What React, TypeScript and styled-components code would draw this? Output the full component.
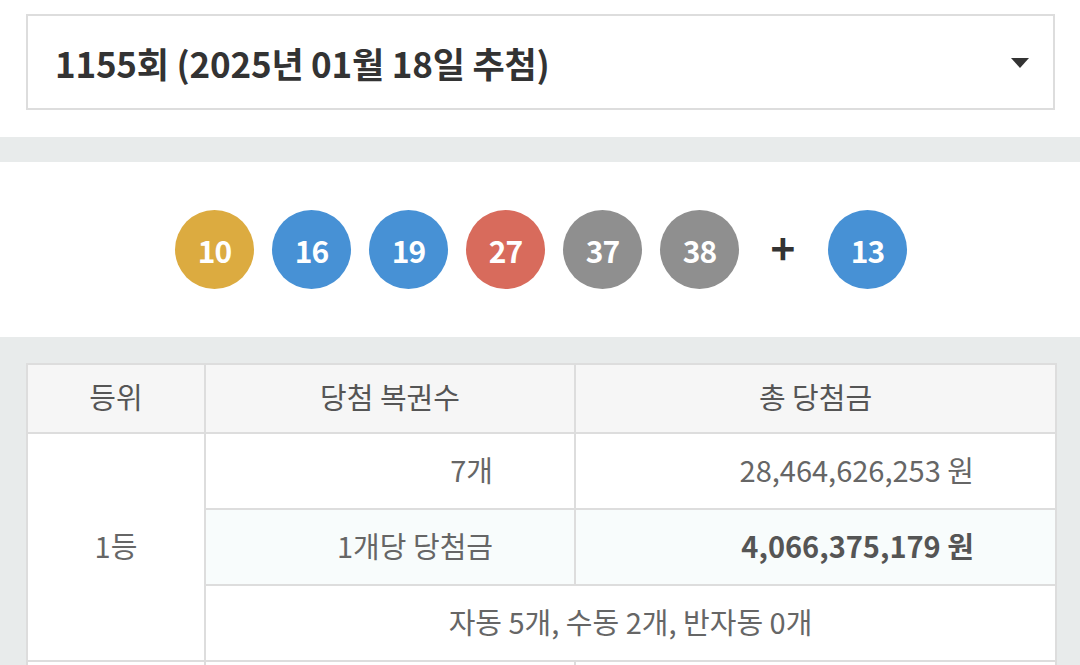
import React from 'react';
import styled, { createGlobalStyle } from 'styled-components';

const GlobalStyle = createGlobalStyle`
  html, body {
    margin: 0;
    padding: 0;
    background: #fff;
  }
  body {
    font-family: 'Noto Sans CJK KR', 'Noto Sans', sans-serif;
    color: #333;
  }
`;

const Page = styled.div`
  width: 1080px;
  background: #e8ebeb;
`;

const TopSection = styled.div`
  background: #fff;
  padding: 14px 25px 27px 26px;
`;

const Select = styled.div`
  box-sizing: border-box;
  height: 96px;
  border: 2px solid #dddddd;
  display: flex;
  align-items: center;
  justify-content: space-between;
  padding: 0 24px 0 27px;
`;

const SelectText = styled.span`
  font-size: 35px;
  font-weight: 700;
  color: #333;
  letter-spacing: -0.2px;
`;

const Caret = styled.span`
  width: 0;
  height: 0;
  border-left: 9px solid transparent;
  border-right: 9px solid transparent;
  border-top: 10px solid #333;
  margin-top: 2px;
`;

const Band = styled.div`
  height: 25px;
`;

const BallSection = styled.div`
  height: 175px;
  background: #fff;
  display: flex;
  align-items: center;
  justify-content: center;
  padding-left: 2px;
  box-sizing: border-box;
`;

const Ball = styled.div<{ $color: string }>`
  width: 79px;
  height: 79px;
  border-radius: 50%;
  background: ${(p) => p.$color};
  color: #fff;
  font-size: 30px;
  font-weight: 700;
  display: flex;
  align-items: center;
  justify-content: center;
  margin-right: 18px;
  letter-spacing: -1px;
  &:last-child {
    margin-right: 0;
  }
`;

const Plus = styled.span`
  font-size: 42px;
  font-weight: 700;
  color: #333;
  width: 52px;
  margin: 0 19px 0 0;
  text-align: center;
  line-height: 1;
  padding-bottom: 6px;
`;

const TableSection = styled.div`
  padding: 26px 25px 0 26px;
`;

const Table = styled.table`
  width: 1029px;
  border-collapse: collapse;
  table-layout: fixed;
  background: #fff;
  font-size: 29px;
  line-height: 40px;
  color: #666;
`;

const Th = styled.th`
  box-sizing: border-box;
  height: 69px;
  background: #f6f6f6;
  border: 2px solid #dddddd;
  font-weight: 400;
  color: #555;
  text-align: center;
  padding: 0 0 5px;
`;

const Td = styled.td<{ $align?: string; $bold?: boolean; $tint?: boolean }>`
  box-sizing: border-box;
  height: 76px;
  border: 2px solid #dddddd;
  text-align: ${(p) => p.$align || 'center'};
  font-weight: ${(p) => (p.$bold ? 700 : 400)};
  color: ${(p) => (p.$bold ? '#555' : '#666')};
  background: ${(p) => (p.$tint ? '#f8fcfc' : '#fff')};
  padding: ${(p) => (p.$align === 'right' ? '0 81px 5px 0' : '0 0 5px')};
`;

const balls = [
  { n: 10, c: '#dcab40' },
  { n: 16, c: '#4791d5' },
  { n: 19, c: '#4791d5' },
  { n: 27, c: '#d86b5c' },
  { n: 37, c: '#8f8f8f' },
  { n: 38, c: '#8f8f8f' },
];

export default function App() {
  return (
    <Page>
      <GlobalStyle />
      <TopSection>
        <Select>
          <SelectText>1155회 (2025년 01월 18일 추첨)</SelectText>
          <Caret />
        </Select>
      </TopSection>
      <Band />
      <BallSection>
        {balls.map((b) => (
          <Ball key={b.n} $color={b.c}>
            {b.n}
          </Ball>
        ))}
        <Plus>+</Plus>
        <Ball $color="#4791d5">13</Ball>
      </BallSection>
      <TableSection>
        <Table>
          <colgroup>
            <col style={{ width: 178 }} />
            <col style={{ width: 370 }} />
            <col style={{ width: 481 }} />
          </colgroup>
          <thead>
            <tr>
              <Th>등위</Th>
              <Th>당첨 복권수</Th>
              <Th>총 당첨금</Th>
            </tr>
          </thead>
          <tbody>
            <tr>
              <Td rowSpan={3}>1등</Td>
              <Td $align="right">7개</Td>
              <Td $align="right">28,464,626,253 원</Td>
            </tr>
            <tr>
              <Td $align="right" $tint>1개당 당첨금</Td>
              <Td $align="right" $tint $bold>4,066,375,179 원</Td>
            </tr>
            <tr>
              <Td colSpan={2}>자동 5개, 수동 2개, 반자동 0개</Td>
            </tr>
            <tr>
              <Td />
              <Td $align="right" />
              <Td $align="right" />
            </tr>
          </tbody>
        </Table>
      </TableSection>
    </Page>
  );
}
